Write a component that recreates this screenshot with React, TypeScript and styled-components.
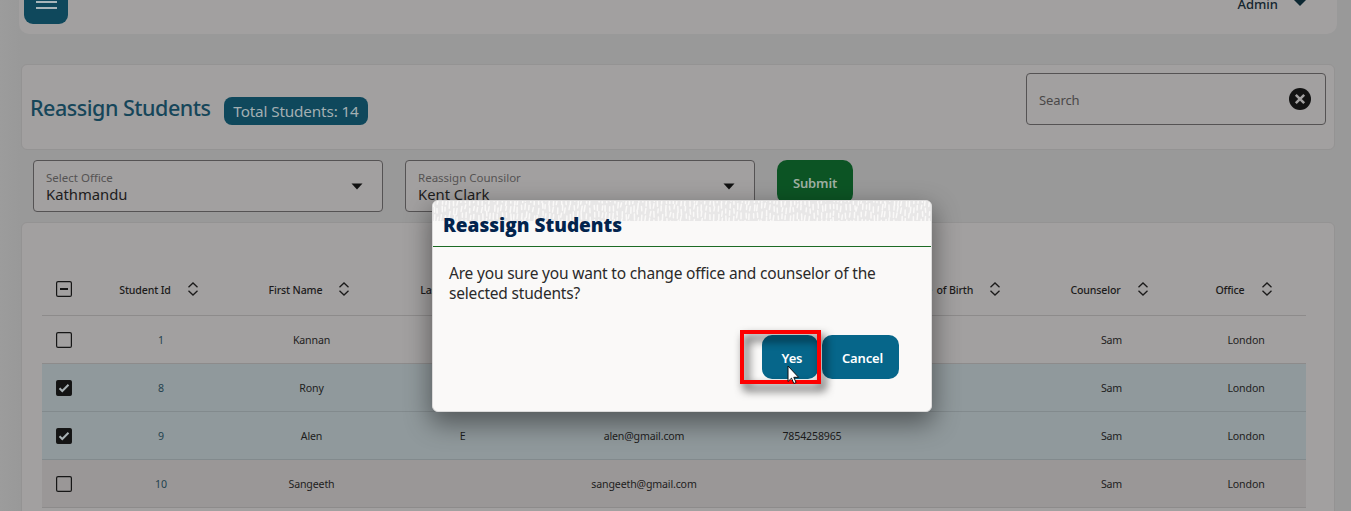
import React from "react";
import styled, { createGlobalStyle, css } from "styled-components";

const ui = `"Noto Sans", "Open Sans", sans-serif`;

const Global = createGlobalStyle`
  *, *::before, *::after { box-sizing: border-box; }
  html, body { margin: 0; height: 100%; overflow: hidden; }
  body { background: #999999; font-family: ${ui}; }
`;

const Page = styled.div`
  position: relative;
  width: 1351px;
  height: 511px;
  overflow: hidden;
  background: linear-gradient(90deg, #9c9c9c 0, #999999 20px);
  padding: 0 14px 0 19px;
  display: flex;
  flex-direction: column;
`;

const TopBar = styled.header`
  flex: none;
  height: 34px;
  border-radius: 0 0 10px 10px;
  background: #a2a0a0;
  display: flex;
  justify-content: space-between;
  align-items: flex-start;
  padding: 0 31px 0 5px;
`;

const MenuButton = styled.button`
  width: 44px;
  height: 24px;
  border: 0;
  padding: 0 0 0 12px;
  border-radius: 0 0 9px 9px;
  background: #0f485c;
  display: flex;
  align-items: flex-start;
  svg { display: block; }
`;

const Account = styled.div`
  display: flex;
  align-items: flex-start;
  gap: 16px;
  height: 16px;
  color: #14262f;
  font-size: 13px;
  line-height: 9px;
  font-weight: 500;
  svg { display: block; }
`;

const Card = styled.section`
  flex: none;
  margin: 0 2px;
  border: 1px solid #949393;
  border-radius: 6px;
  background: #a2a0a0;
`;

const HeaderCard = styled(Card)`
  height: 86px;
  margin-top: 30px;
  display: flex;
  justify-content: space-between;
  align-items: flex-start;
  padding: 8px 8px 0;
`;

const Heading = styled.div`
  display: flex;
  align-items: flex-start;
  padding-top: 20px;
`;

const Title = styled.h1`
  margin: 0;
  width: 194px;
  font-size: 21.5px;
  letter-spacing: -0.48px;
  line-height: 30px;
  font-weight: 500;
  color: #16465a;
  white-space: nowrap;
`;

const Pill = styled.span`
  margin-top: 4px;
  width: 144px;
  height: 28px;
  border-radius: 8px;
  background: #0f485c;
  color: #a3afb2;
  font-size: 15.3px;
  letter-spacing: -0.15px;
  line-height: 29px;
  text-align: center;
  white-space: nowrap;
`;

const fieldBox = css`
  border: 1px solid #555354;
  border-radius: 4px;
  height: 52px;
  display: flex;
  align-items: center;
  justify-content: space-between;
`;

const SearchField = styled.div`
  ${fieldBox}
  width: 300px;
  padding: 0 14px 0 12px;
  color: #4a4848;
  font-size: 13px;
  letter-spacing: -0.1px;
  svg { display: block; }
`;

const SearchText = styled.span`
  padding-top: 2px;
`;

const Controls = styled.div`
  flex: none;
  display: flex;
  gap: 22px;
  height: 72px;
  padding: 10px 0 0 14px;
`;

const SelectField = styled.div`
  ${fieldBox}
  width: 350px;
  background: #a2a0a0;
  padding: 0 19px 0 12px;
  svg { display: block; }
`;

const SelectText = styled.div`
  display: flex;
  flex-direction: column;
  padding-bottom: 1px;
`;

const SelectLabel = styled.span`
  font-size: 11.5px;
  line-height: 17px;
  color: #555353;
`;

const SelectValue = styled.span`
  font-size: 14.8px;
  line-height: 17px;
  color: #1d1c1c;
`;

const Button = styled.button<{ $w: number; $bg: string; $fg?: string; $shift?: number }>`
  width: ${(p) => p.$w}px;
  height: 44px;
  flex: none;
  border: 0;
  border-radius: 10px;
  padding: 1px 0 0 ${(p) => p.$shift ?? 0}px;
  background: ${(p) => p.$bg};
  color: ${(p) => p.$fg ?? "#fff"};
  font: 600 13px/44px ${ui};
  letter-spacing: -0.15px;
`;

const TableCard = styled(Card)`
  height: 300px;
  padding: 41px 0 0 20px;
  border-radius: 6px 6px 0 0;
`;

const Row = styled.div<{ $tone?: "selected" | "shaded" }>`
  width: 1264px;
  height: 48px;
  display: grid;
  grid-template-columns: 41px 156px 145px 157px 206px 130px 160px 149px 120px;
  align-items: center;
  justify-items: center;
  border-bottom: 1px solid ${(p) => (p.$tone === "selected" ? "#828a8d" : "#8d8b8b")};
  background: ${(p) =>
    p.$tone === "selected" ? "#90999c" : p.$tone === "shaded" ? "#9a9797" : "transparent"};
`;

const CheckCell = styled.div`
  padding-left: 3px;
  svg { display: block; }
`;

const HeadRow = styled(Row)`
  height: 52px;
  ${CheckCell} { padding-bottom: 2px; }
`;

const HeadCell = styled.div`
  display: flex;
  align-items: center;
  gap: 11px;
  padding-left: 1px;
  font-size: 10.6px;
  letter-spacing: -0.15px;
  font-weight: 500;
  line-height: 16px;
  color: #1c1b1b;
  white-space: nowrap;
  svg { display: block; margin-bottom: 2px; }
`;

const Cell = styled.div<{ $link?: boolean }>`
  font-size: 10.6px;
  letter-spacing: -0.15px;
  line-height: 16px;
  padding-top: 1px;
  color: ${(p) => (p.$link ? "#24434f" : "#1e1d1d")};
`;

const Dialog = styled.div`
  position: absolute;
  left: 432px;
  top: 200px;
  width: 500px;
  height: 212px;
  border-radius: 6px;
  border: 1px solid #dcdbdb;
  background: #faf9f8;
  box-shadow: 0 10px 26px 2px rgba(0, 0, 0, 0.42);
`;

const DialogHead = styled.div`
  position: relative;
  height: 46px;
  border-bottom: 1px solid #1c6b24;
  border-radius: 5px 5px 0 0;
  overflow: hidden;
  > svg { position: absolute; left: 0; top: 0; }
`;

const DialogTitle = styled.h2`
  position: relative;
  margin: 0;
  padding: 11px 0 0 10px;
  font-family: "Open Sans", "Noto Sans", sans-serif;
  font-size: 19px;
  line-height: 26px;
  font-weight: 800;
  color: #03244d;
`;

const Message = styled.p`
  margin: 16px 16px 0;
  height: 72px;
  font-size: 15.5px;
  letter-spacing: -0.19px;
  line-height: 20px;
  color: #2a2a2a;
`;

const Actions = styled.div`
  display: flex;
  justify-content: flex-end;
  gap: 4px;
  padding-right: 32px;
`;

const Highlight = styled.div`
  position: absolute;
  left: 740px;
  top: 330px;
  width: 81px;
  height: 54px;
  border: 4px solid #fe0000;
  filter: drop-shadow(4px 6px 5px rgba(0, 0, 0, 0.85));
`;

const Pointer = styled.svg`
  position: absolute;
  left: 787px;
  top: 365px;
`;

const Caret = () => (
  <svg width="12" height="7" viewBox="0 0 12 7">
    <path d="M0.5 0.5h11L6 6.5z" fill="#111" />
  </svg>
);

const SortIcon = () => (
  <svg width="22" height="14" viewBox="0 0 22 14" fill="none" stroke="#1c1b1b" strokeWidth="1.3">
    <path d="M6.5 5.2 11 1l4.500 4.200M6.500 8.800 11 13l4.500-4.200" />
  </svg>
);

const Checkbox = ({ state }: { state: "on" | "off" | "mixed" }) => (
  <svg width="16" height="16" viewBox="0 0 16 16">
    <rect x="0.6" y="0.6" width="14.800" height="14.800" rx="1.500" fill={state === "on" ? "#141414" : "none"} stroke="#161616" strokeWidth="1.200" />
    {state === "on" && <path d="M3.500 8.200 6.300 11l6.200-6.200" fill="none" stroke="#a9b2b5" strokeWidth="2" />}
    {state === "mixed" && <path d="M4 8h8" stroke="#161616" strokeWidth="2" />}
  </svg>
);

const makeStrokes = () => {
  let seed = 17;
  const rnd = () => {
    seed = (seed * 16807) % 2147483647;
    return seed / 2147483647;
  };
  let d = "";
  for (let x = 0; x < 500; x += 4) {
    for (let y = -5 * rnd(); y < 21; y += 6 + rnd() * 3) {
      const px = x + rnd() * 2;
      d += `M${px.toFixed(1)} ${y.toFixed(1)}l${(rnd() * 1.4 - 1).toFixed(1)} ${(3.5 + rnd() * 2.5).toFixed(1)}`;
    }
  }
  return d;
};
const strokes = makeStrokes();

const Texture = () => (
  <svg width="498" height="20" viewBox="0 0 498 20">
    <rect width="498" height="20" fill="#e8e7e7" />
    <path d={strokes} stroke="#faf9f8" strokeWidth="1.500" strokeLinecap="round" />
  </svg>
);

type Student = {
  id: string;
  first: string;
  last?: string;
  email?: string;
  phone?: string;
  checked?: boolean;
  shaded?: boolean;
};

const students: Student[] = [
  { id: "1", first: "Kannan" },
  { id: "8", first: "Rony", checked: true },
  { id: "9", first: "Alen", last: "E", email: "alen@gmail.com", phone: "7854258965", checked: true },
  { id: "10", first: "Sangeeth", email: "sangeeth@gmail.com", shaded: true },
];

const columns = ["Student Id", "First Name", "Last Name", "", "", "Date\u2009 of Birth", "Counselor", "Office"];

export default function App() {
  return (
    <>
      <Global />
      <Page>
        <TopBar>
          <MenuButton aria-label="Menu">
            <svg width="21" height="10" viewBox="0 0 21 10">
              <path d="M0 2h21M0 8h21" stroke="#a9b6ba" strokeWidth="1.800" />
            </svg>
          </MenuButton>
          <Account>
            Admin
            <svg width="12" height="6" viewBox="0 0 12 6">
              <path d="M0 0h12L6 6z" fill="#0d2833" />
            </svg>
          </Account>
        </TopBar>

        <HeaderCard>
          <Heading>
            <Title>Reassign Students</Title>
            <Pill>Total Students: 14</Pill>
          </Heading>
          <SearchField>
            <SearchText>Search</SearchText>
            <svg width="22" height="22" viewBox="0 0 22 22">
              <circle cx="11" cy="11" r="11" fill="#131313" />
              <path d="M6.800 6.800l8.400 8.400M15.200 6.800l-8.400 8.400" stroke="#a2a0a0" strokeWidth="2.500" />
            </svg>
          </SearchField>
        </HeaderCard>

        <Controls>
          <SelectField>
            <SelectText>
              <SelectLabel>Select Office</SelectLabel>
              <SelectValue>Kathmandu</SelectValue>
            </SelectText>
            <Caret />
          </SelectField>
          <SelectField>
            <SelectText>
              <SelectLabel>Reassign Counsilor</SelectLabel>
              <SelectValue>Kent Clark</SelectValue>
            </SelectText>
            <Caret />
          </SelectField>
          <Button $w={76} $bg="#0c5424" $fg="#9fb0a3">Submit</Button>
        </Controls>

        <TableCard>
          <HeadRow>
            <CheckCell><Checkbox state="mixed" /></CheckCell>
            {columns.map((c, i) => (
              <HeadCell key={i}>{c && <>{c}<SortIcon /></>}</HeadCell>
            ))}
          </HeadRow>
          {students.map((s) => (
            <Row key={s.id} $tone={s.checked ? "selected" : s.shaded ? "shaded" : undefined}>
              <CheckCell><Checkbox state={s.checked ? "on" : "off"} /></CheckCell>
              <Cell $link>{s.id}</Cell>
              <Cell>{s.first}</Cell>
              <Cell>{s.last}</Cell>
              <Cell>{s.email}</Cell>
              <Cell>{s.phone}</Cell>
              <Cell />
              <Cell>Sam</Cell>
              <Cell>London</Cell>
            </Row>
          ))}
        </TableCard>

        <Dialog role="dialog">
          <DialogHead>
            <Texture />
            <DialogTitle>Reassign Students</DialogTitle>
          </DialogHead>
          <Message>Are you sure you want to change office and counselor of the selected students?</Message>
          <Actions>
            <Button $w={56} $bg="#06668a" $shift={4}>Yes</Button>
            <Button $w={77} $bg="#06668a" $shift={4}>Cancel</Button>
          </Actions>
        </Dialog>
        <Highlight />
        <Pointer width="13" height="20" viewBox="0 0 13 20">
          <path d="M1 1v15.500l3.500-3.300 2.300 5.300 2.300-1-2.300-5.200h4.800z" fill="#fff" stroke="#111" strokeWidth="1" />
        </Pointer>
      </Page>
    </>
  );
}
